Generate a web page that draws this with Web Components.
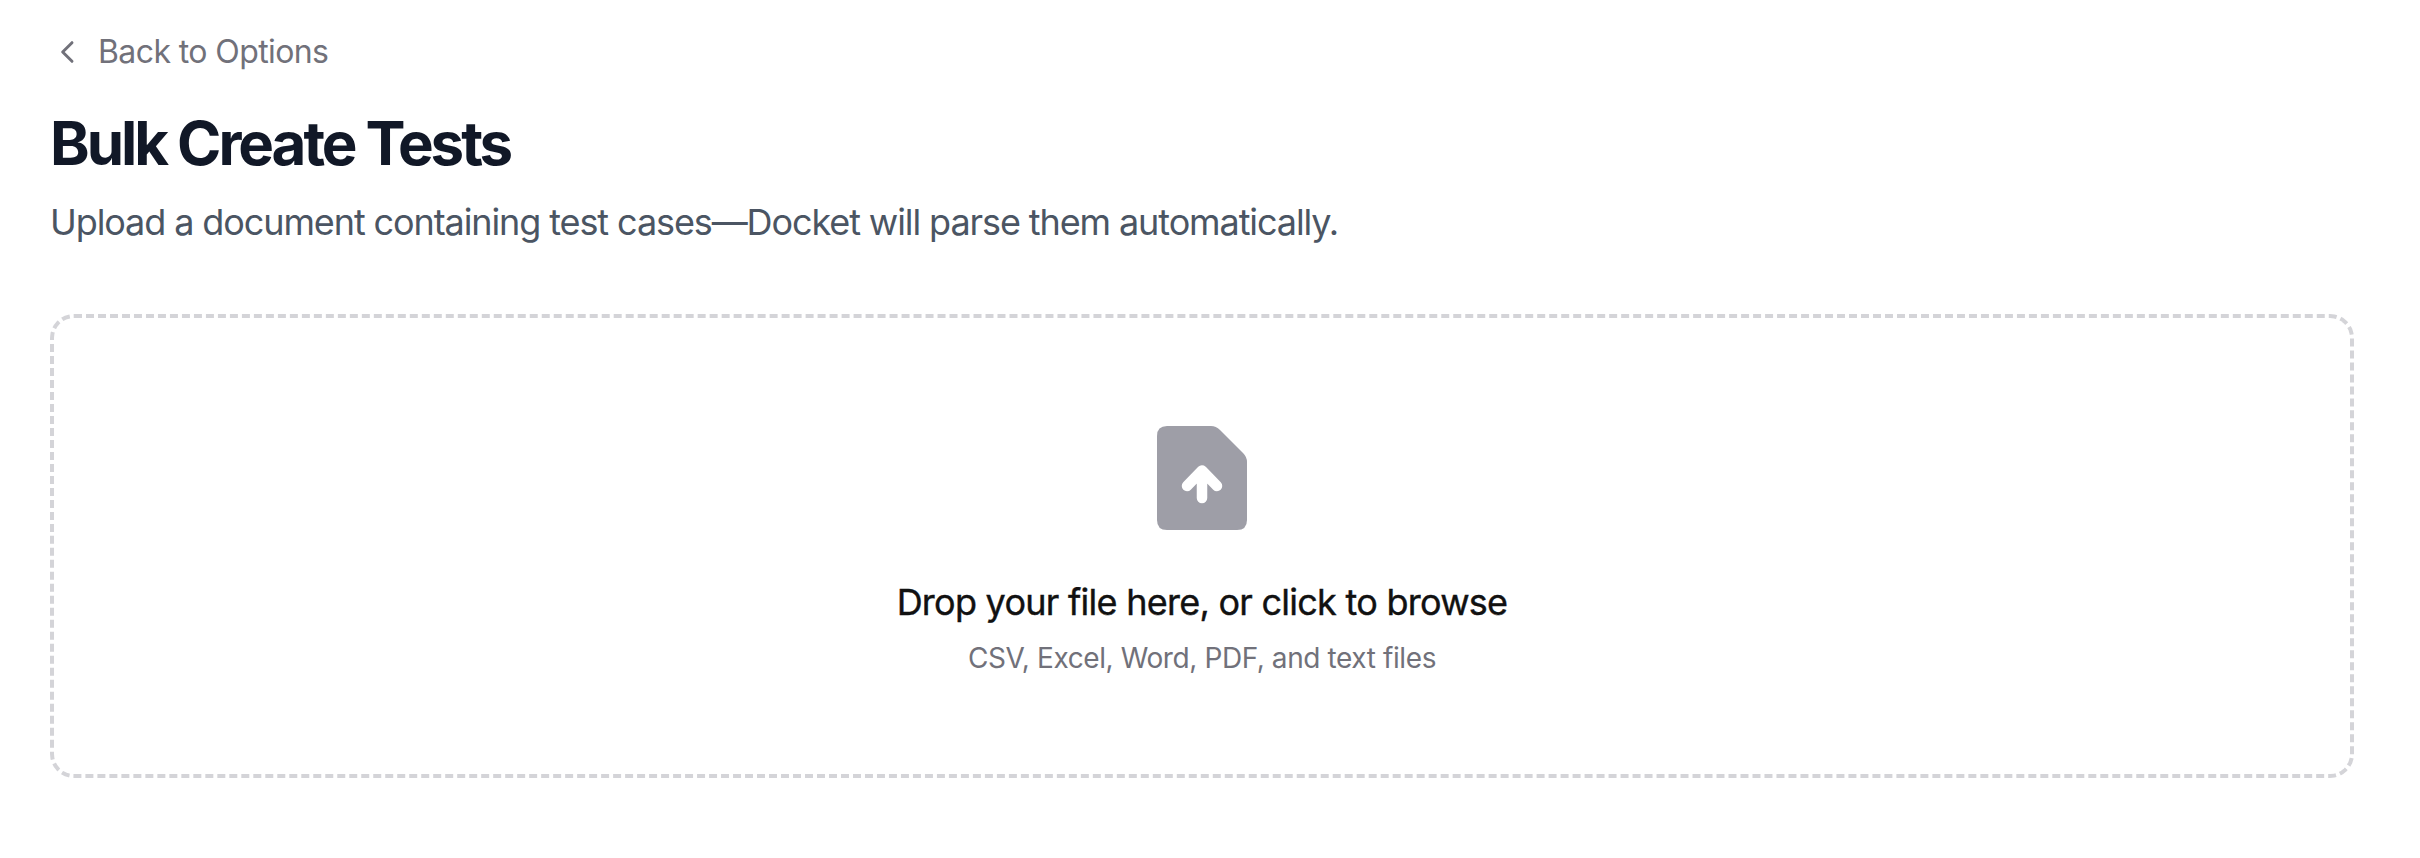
<!DOCTYPE html>
<html lang="en">
<head>
<meta charset="utf-8">
<title>Bulk Create Tests</title>
<style>
  html, body { margin: 0; background: #fff; }
  body { font-family: Inter, "Liberation Sans", sans-serif; }
</style>
</head>
<body>
<bulk-create-page>
  <back-link slot="back">Back to Options</back-link>
  <page-header slot="header" heading="Bulk Create Tests">Upload a document containing test cases—Docket will parse them automatically.</page-header>
  <drop-zone slot="drop" hint="CSV, Excel, Word, PDF, and text files">Drop your file here, or click to browse</drop-zone>
</bulk-create-page>

<script>
class BulkCreatePage extends HTMLElement {
  constructor() {
    super();
    let shadow = this.attachShadow({ mode: "open" });
    shadow.innerHTML = `
      <style>
        :host {
          display: flex;
          flex-direction: column;
          box-sizing: border-box;
          height: 858px;
          padding: 24px 66px 0 50px;
        }
      </style>
      <slot name="back"></slot>
      <slot name="header"></slot>
      <slot name="drop"></slot>
    `;
  }
}

class BackLink extends HTMLElement {
  constructor() {
    super();
    let shadow = this.attachShadow({ mode: "open" });
    shadow.innerHTML = `
      <style>
        :host {
          display: flex;
          align-items: center;
          gap: 14px;
          height: 56px;
          padding-left: 2px;
          font-size: 32px;
          line-height: 56px;
          letter-spacing: -0.6px;
          color: #71717a;
        }
        svg { width: 32px; height: 32px; flex: none; }
      </style>
      <svg viewBox="0 0 24 24" fill="none" stroke="#71717a" stroke-width="2.2" stroke-linecap="round" stroke-linejoin="round">
        <path d="M15 5l-7 7 7 7"/>
      </svg>
      <span><slot></slot></span>
    `;
  }
}

class PageHeader extends HTMLElement {
  constructor() {
    super();
    let shadow = this.attachShadow({ mode: "open" });
    shadow.innerHTML = `
      <style>
        :host { display: block; margin-top: 27px; }
        h1 {
          margin: 0;
          font-size: 60px;
          line-height: 72px;
          font-weight: 700;
          letter-spacing: -3.05px;
          color: #111827;
        }
        p {
          margin: 15px 0 0;
          font-size: 36px;
          line-height: 56px;
          letter-spacing: -1.1px;
          color: #4b5563;
        }
      </style>
      <h1></h1>
      <p><slot></slot></p>
    `;
    shadow.querySelector("h1").textContent = this.getAttribute("heading");
  }
}

class DropZone extends HTMLElement {
  constructor() {
    super();
    let shadow = this.attachShadow({ mode: "open" });
    shadow.innerHTML = `
      <style>
        :host {
          display: flex;
          flex-direction: column;
          align-items: center;
          box-sizing: border-box;
          height: 464px;
          margin-top: 64px;
          padding-top: 108px;
          border: 4px dashed #d4d4d8;
          border-radius: 24px;
        }
        svg { width: 90px; height: 104px; flex: none; }
        .title {
          margin-top: 44px;
          font-size: 36px;
          line-height: 56px;
          font-weight: 400;
          letter-spacing: -0.74px;
          -webkit-text-stroke: 0.4px #111;
          color: #111;
        }
        .hint {
          margin-top: 8px;
          font-size: 28px;
          line-height: 40px;
          letter-spacing: -0.4px;
          color: #71717a;
        }
      </style>
      <svg viewBox="0 0 90 104">
        <path fill="#9e9ea7" d="M10 0H54Q59 0 63 4L86 27Q90 31 90 36V94Q90 104 80 104H10Q0 104 0 94V10Q0 0 10 0Z"/>
        <path fill="none" stroke="#fff" stroke-width="10.5" stroke-linecap="round" stroke-linejoin="round" d="M45 72V45M30 60L45 44.5L60 60"/>
      </svg>
      <div class="title"><slot></slot></div>
      <div class="hint"></div>
    `;
    shadow.querySelector(".hint").textContent = this.getAttribute("hint");
  }
}

customElements.define("bulk-create-page", BulkCreatePage);
customElements.define("back-link", BackLink);
customElements.define("page-header", PageHeader);
customElements.define("drop-zone", DropZone);
</script>
</body>
</html>
